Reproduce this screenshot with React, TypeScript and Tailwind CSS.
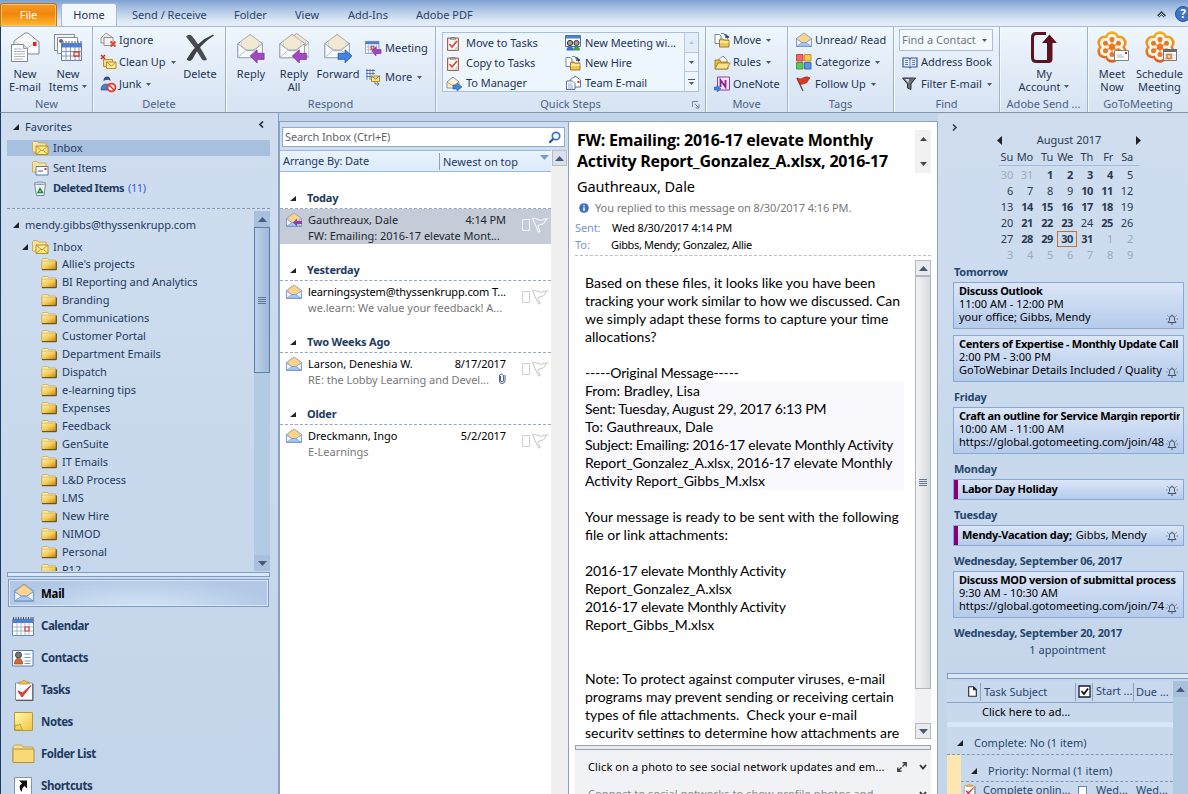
import React from "react";

type P = { children?: React.ReactNode; className?: string };

/* ---------- small shared drawings ---------- */
const Svg = ({ w, h, vb, children, className = "" }: { w: number; h: number; vb?: string; children: React.ReactNode; className?: string }) => (
  <svg width={w} height={h} viewBox={vb || `0 0 ${w} ${h}`} className={`shrink-0 block ${className}`}>{children}</svg>
);
const Down = ({ className = "" }: P) => <Svg w={5} h={3} className={className}><path d="M0 0h5L2.5 3z" fill="#4c5a70" /></Svg>;
const Tri = ({ className = "" }: P) => <Svg w={6} h={6} className={className}><path d="M6 0v6H0z" fill="#222" /></Svg>;

const EnvShape = () => (
  <>
    <path d="M1 12 15 1.5 29 12v16H1z" fill="#f4f7fb" stroke="#8791a0" />
    <path d="M5 15V9l10-7 10 7v6l-10 6z" fill="#f3e8d2" stroke="#c4baa6" strokeWidth=".7" />
    <path d="M1 12v16h28V12l-10 8h-8z" fill="#f8fafc" stroke="#929caa" />
    <path d="M1 28l10-9h8l10 9" fill="none" stroke="#b2bac5" />
  </>
);
const Arrow = ({ c, left }: { c: string; left?: boolean }) => (
  <path d={left ? "M15 26l8-7v4h8v7h-8v4z" : "M32 26l-8-7v4h-8v7h8v4z"} fill={c} stroke={left ? "#6d3190" : "#2756a5"} strokeWidth=".8" />
);
const MailOpen = ({ w = 16, h = 16, cls = "" }: { w?: number; h?: number; cls?: string }) => (
  <Svg w={w} h={h} vb="0 0 16 16" className={cls}>
    <path d="M.5 6.5 8 1l7.5 5.5v8H.5z" fill="#dce9fa" stroke="#7d9ac6" />
    <path d="M2.5 9V5.5L8 1.6l5.500 3.900V9L9.500 11h-3z" fill="#fbd58e" stroke="#e3b468" strokeWidth=".6" />
    <path d="M.5 7v7.500h15V7L10 10.500H6z" fill="#eef5fe" stroke="#7396c8" strokeWidth=".8" />
    <path d="M.8 14.200 6 10.500h4l5.200 3.700z" fill="#a9c8ee" stroke="#5f83b8" strokeWidth=".5" />
  </Svg>
);
const Folder = ({ w = 16, h = 14 }: { w?: number; h?: number }) => (
  <Svg w={w} h={h} vb="0 0 16 14">
    <defs><linearGradient id="fg" x1="0" y1="0" x2="1" y2="1"><stop offset="0" stopColor="#fff0ae" /><stop offset=".5" stopColor="#f4cb55" /><stop offset="1" stopColor="#bd800c" /></linearGradient></defs>
    <path d="M.8 3 1.800 1.500h5L7.800 3h6.700v9H.8z" fill="#f9eab0" stroke="#c9a74a" strokeWidth=".7" />
    <path d="M1 4.200h14V12.500H1z" fill="url(#fg)" stroke="#c39a3c" strokeWidth=".5" />
    <path d="M1 12.700h14.300V4.500" fill="none" stroke="#5a400c" strokeWidth="1" />
  </Svg>
);
const FolderMail = ({ sent }: { sent?: boolean }) => (
  <Svg w={17} h={15}>
    <path d="M.5 1.500 1.500.5h4l1 1.500H14v9H.5z" fill="#f7e4a0" stroke="#c7a24d" strokeWidth=".8" />
    {sent ? (
      <>
        <path d="M4 5.500h12v8.500H4z" fill="#fff" stroke="#5a78ac" />
        <path d="M6 10h5" stroke="#5a78ac" strokeWidth="1.200" /><path d="M12.500 7h2v2h-2z" fill="#d33" />
      </>
    ) : (
      <>
        <path d="M4 5h12v8.500H4z" fill="#fde88a" stroke="#b88d22" />
        <path d="M4 5l6 5 6-5M4 13.500l4.500-4M16 13.500l-4.500-4" fill="none" stroke="#b88d22" strokeWidth=".9" />
      </>
    )}
  </Svg>
);
const Bin = () => (
  <Svg w={17} h={15}>
    <path d="M2.500 2.500h11l-1.500 12H4.500z" fill="#eef3f6" stroke="#7c8a99" />
    <path d="M2 2.500C4 .5 12 .5 14 2.500 12 4 4 4 2 2.500z" fill="#cfd8e0" stroke="#8795a5" />
    <path d="M6 11.500 8 7.500l2.500 4z" fill="none" stroke="#19903a" strokeWidth="1.500" />
  </Svg>
);
const Clip = ({ w = 15, h = 16 }: { w?: number; h?: number }) => (
  <Svg w={w} h={h} vb="0 0 20 21">
    <path d="M1.500 3h17v17h-17z" fill="#fbfbfd" stroke="#8b8f99" />
    <path d="M19 4v16.500H2" fill="none" stroke="#555b68" strokeWidth="1" />
    <path d="M5 4V2h3l1-1.500h2L12 2h3v2z" fill="#f3c34e" stroke="#b58424" strokeWidth=".7" />
    <path d="M4 11l4 6L17 5.500 8.500 13z" fill="#e8483c" stroke="#c42c24" />
  </Svg>
);
const ClipRibbon = () => (
  <Svg w={14} h={15} vb="0 0 14 15">
    <path d="M1.500 2h11v12.500h-11z" fill="#e9d9d3" stroke="#a0634d" /><path d="M3 3.500h8v9.500H3z" fill="#fdfdfd" />
    <path d="M11 13v-3L8.500 13z" fill="#c9c4c4" />
    <path d="M4 3.200 5 1.500h4l1 1.700z" fill="#b5b0ae" stroke="#6d6461" strokeWidth=".6" /><path d="M3.500 8 6 11l5-6" fill="none" stroke="#e2412f" strokeWidth="1.700" />
  </Svg>
);
const Cal = ({ w = 22, h = 19 }: { w?: number; h?: number }) => (
  <Svg w={w} h={h} vb="0 0 22 19">
    <path d="M.5 2.500h21v16H.5z" fill="#fff" stroke="#6b87b8" />
    <path d="M1 2h20v4H1z" fill="#4f7fcf" />
    <path d="M1.500 0v2.500M4 0v2.500M6.500 0v2.500M9 0v2.500M11.500 0v2.500M14 0v2.500M16.500 0v2.500M19 0v2.500M21 0v2.500" stroke="#3b4d70" strokeWidth="1" />
    <path d="M1 10h20M1 14h20M5 6v12M9 6v12M13 6v12M17 6v12" stroke="#8fa5cc" strokeWidth=".8" />
    <path d="M13 10h4v4h-4z" fill="#fff" stroke="#d23c2a" strokeWidth="1.200" />
  </Svg>
);
const FoldPage = () => (
  <Svg w={16} h={15}>
    <path d="M1 1.500h4.500L7 3v7.500H1zM7 .5h3l1.500 1.500V5" fill="#fff" stroke="#6c7c96" strokeWidth=".9" />
    <path d="M10 2q3-1 3.500 2M12 3.500l1.500 1.500L15 3.500" fill="none" stroke="#333c50" strokeWidth="1.100" />
    <path d="M5.500 7 6 6h3l1 1h5v7H5.500z" fill="#f0c552" stroke="#8a6412" strokeWidth=".8" /><path d="M6 8h8.500v2H6z" fill="#fbe69a" />
  </Svg>
);
const petals = [0, 1, 2, 3, 4, 5].map((i) => {
  const a = ((i * 60 - 90) * Math.PI) / 180;
  return [Math.cos(a), Math.sin(a)];
});
const Flower = ({ cal }: { cal?: boolean }) => (
  <Svg w={34} h={34}>
    <defs><linearGradient id="gt" gradientUnits="userSpaceOnUse" x1="0" y1="0" x2="0" y2="32"><stop offset="0" stopColor="#efb51f" /><stop offset="1" stopColor="#dc5a22" /></linearGradient></defs>
    {petals.map(([x, y], i) => <circle key={i} cx={16 + 8.800 * x} cy={16 + 8.800 * y} r={7} fill="url(#gt)" />)}
    {petals.map(([x, y], i) => <circle key={i} cx={16 + 8 * x} cy={16 + 8 * y} r={5.100} fill="#fdf6ea" />)}
    <circle cx={16} cy={16} r={8} fill="#fdf6ea" />
    {petals.map(([x, y], i) => (
      <g key={i}><path d={`M16 16L${16 + 7.500 * x} ${16 + 7.500 * y}`} stroke="#e8842a" strokeWidth="1.300" /><circle cx={16 + 7.500 * x} cy={16 + 7.500 * y} r={2.500} fill="#e67a28" /></g>
    ))}
    <circle cx={16} cy={16} r={3.200} fill="#e67a28" />
    {cal ? (
      <g><path d="M19.500 18.500h13v11h-13z" fill="#fff" stroke="#777" /><path d="M19 18h14v3H19z" fill="#666b74" /><path d="M22 22v7M25 22v7M28 22v7M20 24h12M20 27h12" stroke="#bbb" strokeWidth=".6" /><path d="M23 23.500h4v4h-4z" fill="none" stroke="#e07a20" strokeWidth="1.500" /></g>
    ) : (
      <g><path d="M18.500 19.500h14v10h-14z" fill="#fff" stroke="#7c8086" /><path d="M29 21h2v2h-2z" fill="#d22" /><path d="M21 24h5M21 26h7" stroke="#8fa0b8" strokeWidth=".8" /></g>
    )}
  </Svg>
);
const Bell = () => (
  <Svg w={12} h={12} className="absolute right-[5px] bottom-[3px]">
    <path d="M2 9.500h8L8.500 7.500V5Q8.500 2.800 6 2.800T3.500 5v2.500zM5 11h2M6 1.500v1M1.500 2.500l1 1M10.500 2.500l-1 1M.3 6h1M11.700 6h-1" fill="none" stroke="#3a4658" strokeWidth=".9" />
  </Svg>
);
const Flag = ({ c }: { c: string }) => (
  <Svg w={28} h={18}>
    <path d="M1.500 4.500h7v11h-7z" fill="none" stroke={c} />
    <path d="M11.500 3.500 17.500 17l1.500-.8-2.200-5.200q2-1.800 4-1.600 2 0 3.200-2.900.8-1.700 2.500-2.700-2.500-.3-4.500.7-2.500 1.500-5.500-.3-2.500-1.500-5-.7z" fill="none" stroke={c} strokeWidth="1.100" />
  </Svg>
);

/* ---------- ribbon ---------- */
const Group = ({ label, w, children, last }: { label: string; w: string; children: React.ReactNode; last?: boolean }) => (
  <div className={`${w} h-full shrink-0 flex flex-col border-r ${last ? "border-transparent" : "border-[#9fb3cf]"} shadow-[1px_0_0_#f3f8fd]`}>
    <div className="h-[69px] flex">{children}</div>
    <div className="h-[15px] leading-[15px] text-center text-[#4d6284] whitespace-nowrap">{label}</div>
  </div>
);
const Big = ({ icon, a, b, w, down }: { icon: React.ReactNode; a: string; b?: string; w: string; down?: boolean }) => (
  <div className={`${w} shrink-0 pt-[3px] flex flex-col items-center`}>
    <div className="h-[37px] flex items-start justify-center">{icon}</div>
    <div className="leading-[13px] h-[13px] whitespace-nowrap">{a}</div>
    <div className="leading-[13px] h-[13px] whitespace-nowrap flex items-center gap-[4px]">{b}{down && <Down />}</div>
  </div>
);
const Small = ({ icon, t, down }: { icon: React.ReactNode; t: string; down?: boolean }) => (
  <div className="h-[22px] flex items-center whitespace-nowrap">
    <div className="w-[19px] flex">{icon}</div>
    <span>{t}</span>{down && <Down className="ml-[5px]" />}
  </div>
);
const QS = ({ icon, t }: { icon: React.ReactNode; t: string }) => (
  <div className="h-[20px] flex items-center whitespace-nowrap tracking-[-0.05px]"><div className="w-[20px] flex">{icon}</div><span>{t}</span></div>
);
const Mail32 = ({ children, cls = "" }: { children?: React.ReactNode; cls?: string }) => (
  <Svg w={28} h={30} vb="0 0 32 34" className={`mt-[3px] ${cls}`}><EnvShape />{children}</Svg>
);

function Ribbon() {
  return (
    <div className="h-[87px] shrink-0 flex border-t border-[#a9bbd2] border-b border-b-[#8593a8] border-l border-l-[#1c3a66] bg-[linear-gradient(#eff6fd,#e3edf8_45%,#d6e3f3)]">
      <Group label="New" w="w-[92px]">
        <Big w="w-[48px]" a="New" b="E-mail" icon={
          <Svg w={30} h={32} className="mt-px">
            <path d="M4 10 15 2h3l11 9v12H4z" fill="#f8fafc" stroke="#7d8896" /><path d="M4 10l12 8 12-8" fill="#f2f2ee" stroke="#b0b4ba" strokeWidth=".7" /><path d="M23 11h3.500v4H23z" fill="#d8232a" />
            <path d="M1.500 13.500h12l4 4v13h-16z" fill="#fff" stroke="#7d8896" /><path d="M13.500 13.500v4h4" fill="#dde" stroke="#7d8896" strokeWidth=".8" /><path d="M4 18h8M4 20.500h11M4 23h11M4 25.500h11M4 28h9" stroke="#aab4c4" />
          </Svg>} />
        <Big w="w-[38px]" a="New" b="Items" down icon={
          <Svg w={30} h={32} className="mt-px">
            <path d="M1.500 3.500h20v16h-20z" fill="#f0f2f6" stroke="#858d9b" /><path d="M4.500 6.500h20v16h-20z" fill="#fff" stroke="#858d9b" /><circle cx="8" cy="10" r="2" fill="#667" />
            <path d="M8.500 12.500h20v17h-20z" fill="#fff" stroke="#5f7eb5" /><path d="M8 12h21v4.500H8z" fill="#4f7fcf" />
            <path d="M10 10v3M13 10v3M16 10v3M19 10v3M22 10v3M25 10v3M28 10v3" stroke="#6b7fa5" strokeWidth="1.300" />
            <path d="M9 20.500h20M9 25h20M13 16v14M17.500 16v14M22 16v14M26 16v14" stroke="#7f96c4" /><path d="M21 21h5v4h-5z" fill="#fff" stroke="#d23c2a" strokeWidth="1.300" />
          </Svg>} />
      </Group>
      <Group label="Delete" w="w-[133px]">
        <div className="w-[86px] pl-[7px] pt-[2px]">
          <Small t="Ignore" icon={<Svg w={17} h={16}><path d="M1 6l5-5 6 4v6H1z" fill="#f6e7c8" stroke="#969ca8" /><path d="M4 5.500h9v8H4z" fill="#eef1f6" stroke="#8a93a2" /><path d="M10.500 9.500l5 5M15.500 9.500l-5 5" stroke="#e0402e" strokeWidth="1.800" /></Svg>} />
          <Small t="Clean Up" down icon={<Svg w={17} h={16}><path d="M1 1l4 4M5 1 1 5" stroke="#d8301f" strokeWidth="1.600" /><path d="M3.500 5.500h9v7h-9z" fill="#f8dd84" stroke="#b98d22" /><path d="M6.500 8h9.500v6.500H6.500z" fill="#fdeca0" stroke="#b98d22" /><path d="M6.500 8l5 4 4.500-4" fill="none" stroke="#b98d22" /></Svg>} />
          <Small t="Junk" down icon={<Svg w={17} h={17}><circle cx="7" cy="4.500" r="3.400" fill="#dfe5ee" /><path d="M3.500 5q0-4.500 3.500-4.500T10.500 5Q8 2.500 3.500 5z" fill="#36507f" /><path d="M1 14q0-6 5-6 5 0 5 6z" fill="#4c7bd0" stroke="#2f4f92" strokeWidth=".7" /><circle cx="11.500" cy="11.500" r="3.900" fill="#fff" stroke="#df3b25" strokeWidth="1.800" /><path d="M9 9l5 5" stroke="#df3b25" strokeWidth="1.600" /></Svg>} />
        </div>
        <Big w="w-[42px]" a="Delete" icon={
          <Svg w={30} h={30} className="mt-[3px]"><path d="M1 3.500Q4 .5 7 3q8 10 15 23.500-3 2-5 0Q10 14 1 3.500z" fill="#4a4c4f" /><path d="M29 2.500Q15 11 7.500 26 5 29.500 1.500 26.500 12 8 28 1.500z" fill="#3f4144" /></Svg>} />
      </Group>
      <Group label="Respond" w="w-[210px]">
        <Big w="w-[50px]" a="Reply" icon={<Mail32><Arrow c="#a447c3" left /></Mail32>} />
        <Big w="w-[36px]" a="Reply" b="All" icon={<Svg w={30} h={30} vb="0 0 34 34" className="mt-[3px]"><g transform="translate(5 -1)"><EnvShape /></g><EnvShape /><Arrow c="#a447c3" left /></Svg>} />
        <Big w="w-[52px]" a="Forward" icon={<Mail32><Arrow c="#3f83e6" /></Mail32>} />
        <div className="pt-[10px] pl-[1px]">
          <div className="h-[22px] flex items-center"><div className="w-[20px]"><Svg w={17} h={16}><g transform="scale(.68 .7)"><path d="M.5 2h20v17H.5z" fill="#fff" stroke="#5876b5" /><path d="M.5 2h20v4H.5z" fill="#4f7fcf" /><path d="M1 10h19M1 14h19M5 6v13M9 6v13M13 6v13M17 6v13" stroke="#8fa5cc" /><path d="M9 9h4v4H9z" fill="none" stroke="#d23c2a" strokeWidth="1.500" /></g><path d="M7 11l4-4v2.500h5v4h-5V16z" fill="#a447c3" stroke="#6d3190" strokeWidth=".6" /></Svg></div>Meeting</div>
          <div className="h-[7px]" />
          <div className="h-[22px] flex items-center"><div className="w-[20px]"><Svg w={17} h={17}><path d="M1 1h9v10H1z" fill="#fff" /><path d="M1 1.500h9M1 4.500h9M1 7.500h5M2 0v11M5 0v11M8 0v6" stroke="#5578b5" /><path d="M6.500 7h8v5.500h-8z" fill="#fbe08a" stroke="#b98d22" /><path d="M6.500 7l4 3 4-3M10 13v2h3M12 13.500l2 1.500-2 1.500" fill="none" stroke="#6c7990" /></Svg></div>More<Down className="ml-[5px]" /></div>
        </div>
      </Group>
      <Group label="Quick Steps" w="w-[270px]">
        <div className="mt-[5px] ml-[6px] w-[257px] h-[60px] border border-[#a9bfdc] bg-[#edf5fd] flex relative">
          <div className="w-[120px] pl-[3px]">
            <QS t="Move to Tasks" icon={<ClipRibbon />} /><QS t="Copy to Tasks" icon={<ClipRibbon />} />
            <QS t="To Manager" icon={<Svg w={17} h={16}><path d="M1 7l6-5 6 5v6H1z" fill="#fdf3d8" stroke="#8c97a8" /><path d="M1 7l6 4 6-4" fill="none" stroke="#c99d3c" /><path d="M7 10h4V8l5 4-5 4v-2H7z" fill="#3f83e6" stroke="#2756a5" strokeWidth=".6" /></Svg>} />
          </div>
          <div className="w-[121px] pl-[2px]">
            <QS t="New Meeting wi..." icon={<Svg w={17} h={16}><path d="M.5.5h15v11H.5z" fill="#fff" stroke="#4f6fae" /><path d="M.5.5h15v3H.5z" fill="#4f7fcf" /><circle cx="5" cy="8" r="2.600" fill="#a98" stroke="#333" /><circle cx="11.500" cy="8" r="2.600" fill="#a98" stroke="#333" /><path d="M1.500 15.500q0-4 3.500-4t3.500 4z" fill="#3f6fce" /><path d="M8 15.500q0-4 3.500-4t3.500 4z" fill="#3fa04e" /></Svg>} />
            <QS t="New Hire" icon={<FoldPage />} />
            <QS t="Team E-mail" icon={<Svg w={17} h={16}><path d="M5 5l5-4 5.500 4v7H5z" fill="#fff" stroke="#5f7396" /><path d="M12.500 6h2v2h-2z" fill="#d22" /><path d="M1.500 6h6l2.500 2.500v6h-8.500z" fill="#fff" stroke="#5f7396" /><path d="M3 9h4M3 11h5M3 13h5" stroke="#8fa5c5" /></Svg>} />
          </div>
          <div className="w-[14px] flex flex-col border-l border-[#b7cae2]">
            <div className="h-[19px] flex items-center justify-center bg-[#e3edf8]"><Svg w={5} h={3}><path d="M0 3h5L2.500 0z" fill="#b9c5d6" /></Svg></div>
            <div className="h-[20px] flex items-center justify-center border-y border-[#b7cae2]"><Down /></div>
            <div className="h-[19px] flex flex-col gap-[2px] items-center justify-center"><div className="w-[7px] h-px bg-[#4c5a70]" /><Down /></div>
          </div>
        </div>
        <div className="relative"><Svg w={8} h={8} className="absolute left-[-7px] top-[74px]"><path d="M.5 6V.5H6M3 3l4 4M7 3.500V7H3.500" fill="none" stroke="#75879f" /></Svg></div>
      </Group>
      <Group label="Move" w="w-[82px]">
        <div className="pl-[8px] pt-[2px]">
          <Small t="Move" down icon={<FoldPage />} />
          <Small t="Rules" down icon={<Svg w={17} h={15}><path d="M4 5l5-4 4 4v4H4z" fill="#f4f6fa" stroke="#8c97a8" /><path d="M1 5h5l1 2h7v7H1z" fill="#e9b93e" stroke="#9a7319" strokeWidth=".8" /><path d="M4 8h12l-3 6H1z" fill="#fbe28c" stroke="#9a7319" strokeWidth=".8" /></Svg>} />
          <Small t="OneNote" icon={<Svg w={17} h={16}><path d="M3.500 1h12v13h-12z" fill="#f7e6f7" stroke="#9a3a9e" /><path d="M6.500 11V4l5 7V4" fill="none" stroke="#8a2390" strokeWidth="1.800" /><path d="M0 11h3V9l4 3.500L3 16v-2H0z" fill="#3f83e6" stroke="#2756a5" strokeWidth=".5" /></Svg>} />
        </div>
      </Group>
      <Group label="Tags" w="w-[106px]">
        <div className="pl-[8px] pt-[2px]">
          <Small t="Unread/ Read" icon={<MailOpen />} />
          <Small t="Categorize" down icon={<Svg w={16} h={16}><path d="M.5.5h6.500v6.500H.5z" fill="#ee6a5e" stroke="#c4463c" /><path d="M8.500.5H15v6.500H8.500z" fill="#f7c550" stroke="#c9952a" /><path d="M.5 8.500h6.500V15H.5z" fill="#62c75a" stroke="#3f9a3b" /><path d="M8.500 8.500H15V15H8.500z" fill="#5f93e8" stroke="#3c69b8" /></Svg>} />
          <Small t="Follow Up" down icon={<Svg w={16} h={16}><path d="M1 2l6 13" stroke="#555" strokeWidth="1.400" /><path d="M1 2q4 2 7-.5 3-1.500 6 .5-2 2-3 4.500Q8 8 4 8.500z" fill="#d93a26" stroke="#a62416" strokeWidth=".7" /></Svg>} />
        </div>
      </Group>
      <Group label="Find" w="w-[106px]">
        <div className="pl-[5px] pt-[2px]">
          <div className="w-[94px] h-[22px] border border-[#a9bfdc] bg-[#f4f9fe] flex items-center text-[#71777f] pl-[2px] whitespace-nowrap">Find a Contact<Down className="ml-[6px]" /></div>
          <div className="pl-[3px]">
            <Small t="Address Book" icon={<Svg w={16} h={13}><path d="M1 2h6l1 1 1-1h6v9H9l-1 1-1-1H1z" fill="#e4edfa" stroke="#36558f" strokeWidth="1.200" /><path d="M8 3v9M3 4.500h3M3 6.500h3M3 8.500h3M10 4.500h3M10 6.500h3M10 8.500h3" stroke="#5f83c5" /></Svg>} />
            <Small t="Filter E-mail" down icon={<Svg w={15} h={14}><path d="M.5 1h13L9 7v5.500L5.500 11V7z" fill="#6b6e73" stroke="#33363b" /><path d="M3 2h4L6.500 6z" fill="#ddd" /></Svg>} />
          </div>
        </div>
      </Group>
      <Group label="Adobe Send ..." w="w-[88px]">
        <Big w="w-[88px]" a="My" b="Account" down icon={<Svg w={28} h={32} className="mt-px"><path d="M16 2.500H6q-3.500 0-3.500 4v20q0 4 4 4h12q2.500 0 2.500-3V12" fill="none" stroke="#5c1320" strokeWidth="3" /><path d="M17 12v18h5V12h5l-7.500-8.500L12 12z" fill="#5c1320" /></Svg>} />
      </Group>
      <Group label="GoToMeeting" w="w-[101px]" last>
        <Big w="w-[48px]" a="Meet" b="Now" icon={<div className="mt-px ml-[2px]"><Flower /></div>} />
        <Big w="w-[47px]" a="Schedule" b="Meeting" icon={<div className="mt-px ml-[2px]"><Flower cal /></div>} />
      </Group>
    </div>
  );
}

/* ---------- navigation pane ---------- */
const folders = ["Allie's projects", "BI Reporting and Analytics", "Branding", "Communications", "Customer Portal", "Department Emails", "Dispatch", "e-learning tips", "Expenses", "Feedback", "GenSuite", "IT Emails", "L&D Process", "LMS", "New Hire", "NIMOD", "Personal", "P12"];

const navs: [string, React.ReactNode][] = [
  ["Calendar", <Cal />],
  ["Contacts", <Svg w={22} h={17}><path d="M.5.5h20.500v15.500H.5z" fill="#fff" stroke="#5f7da8" /><circle cx="6.500" cy="5" r="3" fill="#777" stroke="#444" /><path d="M2.500 14q0-5.500 4-5.500t4 5.500z" fill="#d9692b" stroke="#8d3c12" strokeWidth=".7" /><path d="M12.500 4h6M12.500 7.500h6M12.500 11h6M12.500 13.500h6" stroke="#6e95cf" /></Svg>],
  ["Tasks", <div className="ml-[2px]"><Clip w={20} h={21} /></div>],
  ["Notes", <Svg w={20} h={20} className="ml-[2px]"><defs><linearGradient id="nt" x1="0" y1="0" x2="1" y2="1"><stop offset="0" stopColor="#fffbb0" /><stop offset="1" stopColor="#efc63f" /></linearGradient></defs><path d="M.5.5h18v18H.5z" fill="url(#nt)" stroke="#b99a32" /><path d="M1 13q3 1 5-1 1 3 2.500 6H1z" fill="#f0d45c" stroke="#b08a1e" strokeWidth=".7" /></Svg>],
  ["Folder List", <Svg w={23} h={20}><path d="M1 2.500 2.500 1h7L11 3h10v15H1z" fill="#f6df98" stroke="#c7a24d" /><path d="M1 5h21v13.500H1z" fill="#f8d976" stroke="#b58f38" /></Svg>],
  ["Shortcuts", <Svg w={18} h={18} className="ml-[2px]"><path d="M.5.5h17v17H.5z" fill="#fff" stroke="#8794a8" /><path d="M5 3.500h8v8l-2.500-2.500q-3 2.500-2.500 6-5-5 0-8.500z" fill="#111" /></Svg>],
];

const ScrollBtn = ({ up, cls = "" }: { up?: boolean; cls?: string }) => (
  <div className={`h-[16px] shrink-0 flex items-center justify-center ${cls}`}><Svg w={9} h={5}><path d={up ? "M0 5h9L4.500 0z" : "M0 0h9L4.500 5z"} fill="#4a5b7a" /></Svg></div>
);
const Grip = () => <div className="w-[8px] flex flex-col gap-px"><div className="h-px bg-[#5f7697]" /><div className="h-px bg-[#5f7697]" /><div className="h-px bg-[#5f7697]" /><div className="h-px bg-[#5f7697]" /></div>;

function Nav() {
  return (
    <div className="w-[279px] shrink-0 border-l border-[#1c3a66] border-r border-r-[#8ba2bf] pl-[6px] pr-[8px] flex flex-col text-[#1e3a5f] bg-[linear-gradient(#cfddef,#c3d5ea)]">
      <div className="h-[27px] shrink-0 flex items-center justify-between pl-[5px] pr-[6px]">
        <div className="flex items-center pt-px"><Tri className="ml-px" /><span className="ml-[6px]">Favorites</span></div>
        <Svg w={6} h={7} className="mb-[5px]"><path d="M5 .5 2 3.500l3 3" fill="none" stroke="#222e44" strokeWidth="1.700" /></Svg>
      </div>
      <div className="h-[16px] shrink-0 bg-[#a8c0e0] flex items-center pl-[25px]"><FolderMail /><span className="ml-[4px]">Inbox</span></div>
      <div className="h-[24px] shrink-0 flex items-center pl-[25px]"><FolderMail sent /><span className="ml-[4px] tracking-[-0.2px]">Sent Items</span></div>
      <div className="h-[16px] shrink-0 flex items-center pl-[25px]"><Bin /><span className="ml-[4px] font-bold tracking-[-0.5px]">Deleted Items</span><span className="ml-[4px] text-[#2f62d8] tracking-[-0.4px]">(11)</span></div>
      <div className="h-[13px] shrink-0 border-b border-dashed border-[#7f97b8]" />
      <div className="h-[360px] mt-[2px] shrink-0 flex overflow-hidden">
        <div className="w-[247px] overflow-hidden">
          <div className="h-[28px] flex items-center pl-[5px] tracking-[-0.05px]"><Tri className="ml-px" /><span className="ml-[6px]">mendy.gibbs@thyssenkrupp.com</span></div>
          <div className="h-[16px] flex items-center pl-[15px]"><Tri /><div className="ml-[4px]"><FolderMail /></div><span className="ml-[4px]">Inbox</span></div>
          {folders.map((f) => (
            <div key={f} className="h-[18px] flex items-center pl-[34px] whitespace-nowrap tracking-[-0.03px]"><Folder /><span className="ml-[5px]">{f}</span></div>
          ))}
        </div>
        <div className="w-[16px] flex flex-col bg-[#b3cae3]">
          <ScrollBtn up cls="bg-[#a9c0dd]" />
          <div className="h-[146px] border border-[#5e7ea8] bg-[linear-gradient(90deg,#bcd1e9,#9db9da)] flex items-center justify-center"><Grip /></div>
          <div className="flex-1" />
          <ScrollBtn cls="bg-[#a9c0dd]" />
        </div>
      </div>
      <div className="mt-px h-[5px] shrink-0 border border-[#7f9cc4] bg-[#dbe7f5]" />
      <div className="mt-[2px] mr-px ml-px h-[28px] shrink-0 border border-[#7f9cc4] shadow-[inset_0_0_0_1px_#dce8f6] bg-[radial-gradient(ellipse_at_50%_100%,#d3e3f5,#b1c9e6_75%)] flex items-center pl-[5px]">
        <MailOpen w={20} h={20} /><span className="ml-[7px] mt-px text-black font-bold text-[11.500px] tracking-[-0.3px]">Mail</span>
      </div>
      <div className="mt-[3px]">
        {navs.map(([t, i]) => (
          <div key={t} className="h-[32px] flex items-center pl-[5px]"><div className="w-[29px]">{i}</div><span className="font-bold text-[11.500px] tracking-[-0.45px]">{t}</span></div>
        ))}
      </div>
    </div>
  );
}

/* ---------- message list ---------- */
type Msg = { g: string; from: string; date?: string; sub: string; sel?: boolean; clip?: boolean };
const msgs: Msg[] = [
  { g: "Today", from: "Gauthreaux, Dale", date: "4:14 PM", sub: "FW: Emailing: 2016-17 elevate Mont...", sel: true },
  { g: "Yesterday", from: "learningsystem@thyssenkrupp.com T...", sub: "we.learn: We value your feedback! A..." },
  { g: "Two Weeks Ago", from: "Larson, Deneshia W.", date: "8/17/2017", sub: "RE: the Lobby Learning and Devel...", clip: true },
  { g: "Older", from: "Dreckmann, Ingo", date: "5/2/2017", sub: "E-Learnings" },
];
function List() {
  return (
    <div className="w-[289px] shrink-0 mt-[8px] border-t border-l border-[#8ba2bf] bg-white flex flex-col">
      <div className="h-[28px] shrink-0 bg-[#cfddef] pt-[5px] pl-[2px] pr-[3px]">
        <div className="h-[20px] border border-[#8fabd3] bg-white flex items-center justify-between pl-[2px] pr-[3px] text-[#5f646b]">
          <span className="tracking-[-0.1px]">Search Inbox (Ctrl+E)</span>
          <Svg w={13} h={13}><circle cx="8" cy="5" r="3.700" fill="#f2f8ff" stroke="#3f74bd" strokeWidth="1.700" /><path d="M5.300 7.700 1.300 11.700" stroke="#2c5596" strokeWidth="2.300" /></Svg>
        </div>
      </div>
      <div className="flex flex-1">
        <div className="w-[271px]">
          <div className="h-[22px] border-y border-[#9db9dc] bg-[linear-gradient(#e9f3fd,#dcebfb)] flex items-center pl-[3px] text-[#1e3a5f] tracking-[-0.1px]">
            <span className="w-[156px]">Arrange By: Date</span>
            <span className="h-[17px] leading-[17px] border-l border-[#8aa0bf] pl-[3px] w-[98px] whitespace-nowrap tracking-normal">Newest on top</span>
            <Svg w={9} h={5} className="mb-[7px] ml-[3px]"><path d="M0 0h9L4.500 5z" fill="#7d99c4" /></Svg>
          </div>
          <div className="h-[16px]" />
          {msgs.map((m) => (
            <div key={m.g} className="h-[72px]">
              <div className="h-[21px] flex items-center pl-[10px] border-b border-dashed border-[#94a8c6] font-bold text-[#1e3a5f] tracking-[-0.2px]"><Svg w={6} h={5}><path d="M6 0v5H0z" fill="#222" /></Svg><span className="ml-[11px]">{m.g}</span></div>
              <div className={`h-[35px] flex ${m.sel ? "bg-[#c5ccd7]" : ""}`}>
                <div className="w-[28px] pl-[6px] pt-[3px] relative"><MailOpen />{m.sel && <Svg w={9} h={9} className="absolute left-[13px] top-[9px]"><path d="M0 4.500 4 .5v2.500h5v3H4v2.500z" fill="#8e3fb0" /></Svg>}</div>
                <div className="w-[198px] leading-[16px] pt-[3px] whitespace-nowrap">
                  <div className={`flex justify-between ${m.sel ? "text-[#22272f]" : "text-black"}`}><span className={m.date ? "" : "tracking-[-0.13px]"}>{m.from}</span><span className="tracking-[-0.1px]">{m.date}</span></div>
                  <div className={`flex justify-between items-center ${m.sel ? "text-[#22272f]" : "text-[#787878]"}`}><span className="tracking-[-0.02px]">{m.sub}</span>{m.clip && <Svg w={8} h={11} className="mb-[3px]"><path d="M2.500 3v5q1.500 1.500 3 0V2.500Q4 0 1.500 2v6q0 2.500 2.500 2.500T7 8V2" fill="none" stroke="#49618b" /></Svg>}</div>
                </div>
                <div className="pl-[15px] pt-[6px]"><Flag c={m.sel ? "#f5f7fa" : "#cfcfcf"} /></div>
              </div>
            </div>
          ))}
        </div>
        <div className="w-[17px] pl-px bg-[#f0f0f1]"><ScrollBtn up cls="border border-[#b5bdca] bg-[#dbe1ea] w-[15px]" /></div>
      </div>
    </div>
  );
}

/* ---------- reading pane ---------- */
const body = ["Based on these files, it looks like you have been", "tracking your work similar to how we discussed. Can", "we simply adapt these forms to capture your time", "allocations?", "", "-----Original Message-----", "From: Bradley, Lisa", "Sent: Tuesday, August 29, 2017 6:13 PM", "To: Gauthreaux, Dale", "Subject: Emailing: 2016-17 elevate Monthly Activity", "Report_Gonzalez_A.xlsx, 2016-17 elevate Monthly", "Activity Report_Gibbs_M.xlsx", "", "Your message is ready to be sent with the following", "file or link attachments:", "", "2016-17 elevate Monthly Activity", "Report_Gonzalez_A.xlsx", "2016-17 elevate Monthly Activity", "Report_Gibbs_M.xlsx", "", "", "Note: To protect against computer viruses, e-mail", "programs may prevent sending or receiving certain", "types of file attachments.\u00a0 Check your e-mail", "security settings to determine how attachments are"];
const tracking = (i: number, l: string) => (i === 10 ? "tracking-[-0.07px]" : /\d/.test(l) ? "tracking-[-0.2px]" : i === 1 ? "tracking-[-0.08px]" : i === 5 ? "tracking-[-0.15px]" : "");
const Chev = () => <Svg w={8} h={6}><path d="M1 1l3 3.500L7 1" fill="none" stroke="#333" strokeWidth="1.800" /></Svg>;

function Reading() {
  return (
    <div className="w-[370px] shrink-0 mt-[8px] border border-[#8ba2bf] border-b-0 bg-white flex flex-col text-black">
      <div className="h-[134px] shrink-0 mx-[6px] border-b border-dashed border-[#b9bfc8]">
        <div className="flex justify-between pt-[8px] h-[53px]">
          <div className="font-['Open_Sans'] font-bold text-[16px] leading-[21px] tracking-[-0.23px] pl-[2px] whitespace-nowrap">FW: Emailing: 2016-17 elevate Monthly<br />Activity Report_Gonzalez_A.xlsx, 2016-17</div>
          <div className="w-[16px] h-[43px] bg-[#f1f1f1] flex flex-col justify-between items-center py-[7px]"><Svg w={7} h={4}><path d="M0 4h7L3.500 0z" fill="#444" /></Svg><Svg w={7} h={4}><path d="M0 0h7L3.500 4z" fill="#444" /></Svg></div>
        </div>
        <div className="h-[23px] leading-[23px] text-[14.500px] tracking-[-0.05px] pl-[2px]">Gauthreaux, Dale</div>
        <div className="h-[20px] flex items-center pl-[4px] text-[#777] tracking-[-0.09px]"><Svg w={10} h={10}><circle cx="5" cy="5" r="4.800" fill="#3f6fc0" /><path d="M5 2v1.300M5 4.300V8" stroke="#fff" strokeWidth="1.500" /></Svg><span className="ml-[6px]">You replied to this message on 8/30/2017 4:16 PM.</span></div>
        <div className="h-[20px] flex items-center tracking-[-0.1px]"><span className="w-[37px] text-[#7597cf]">Sent:</span>Wed 8/30/2017 4:14 PM</div>
        <div className="h-[15px] flex items-center tracking-[-0.35px]"><span className="w-[36px] text-[#7597cf] tracking-normal">To:</span>Gibbs, Mendy; Gonzalez, Allie</div>
      </div>
      <div className="h-[485px] shrink-0 flex pt-[4px]">
        <div className="w-[346px] h-[478px] overflow-hidden pl-[16px] pt-[14px] font-[Lato] text-[14px] whitespace-pre">
          {body.map((l, i) => <div key={i} className={`h-[18px] leading-[18px] w-[319px] ${tracking(i, l)} ${i > 5 && i < 12 ? "bg-[#f8f8fd]" : ""}`}>{l}</div>)}
        </div>
        <div className="w-[16px] h-[479px] flex flex-col bg-[#f1f1f3]">
          <ScrollBtn up cls="border border-[#b5b9c2] bg-[#e9ebef]" />
          <div className="h-[413px] border border-[#b0b4bd] bg-[linear-gradient(90deg,#f3f3f5,#d9dbe0)] flex items-center justify-center"><Grip /></div>
          <div className="flex-1" />
          <ScrollBtn cls="border border-[#b5b9c2] bg-[#e9ebef]" />
        </div>
      </div>
      <div className="mx-[6px] mt-[4px] h-[5px] shrink-0 border border-[#9ba1aa] bg-[#e9ebee]" />
      <div className="ml-[6px] mr-[6px] flex-1 bg-[#f0f2f5] pt-[7px] pl-[13px] whitespace-nowrap overflow-hidden">
        <div className="h-[20px] flex items-center justify-between pr-[4px]"><span className="tracking-[0.12px]">Click on a photo to see social network updates and em...</span><div className="flex items-center gap-[12px]"><Svg w={10} h={10}><path d="M5.500.8h3.700v3.700M4.500 9.200H.8V5.500M9 1 5.500 4.500M1 9l3.500-3.500" fill="none" stroke="#444" strokeWidth="1.500" /></Svg><Chev /></div></div>
        <div className="h-[34px] flex items-center justify-between pr-[4px] text-[#8a8a8a]"><span className="tracking-[0.1px]">Connect to social networks to show profile photos and</span><Chev /></div>
      </div>
    </div>
  );
}

/* ---------- to-do bar ---------- */
const weeks = ["30 31 1b 2b 3b 4b 5", "6 7 8 9 10b 11b 12", "13 14b 15b 16b 17b 18b 19", "20 21b 22b 23b 24 25b 26", "27 28b 29b 30b 31b 1 2", "3 4 5 6 7 8 9"];
const Day = ({ children }: P) => <div className="h-[18px] leading-[18px] pl-[1px] font-bold tracking-[-0.25px] text-[#26466f]">{children}</div>;
const Appt = ({ t, l1, l2, cls = "" }: { t: string; l1: string; l2: string; cls?: string }) => (
  <div className={`h-[47px] w-[231px] border border-[#8aa8d6] bg-[linear-gradient(#dbe6f7,#b5cbeb)] relative leading-[13px] pt-[1px] pl-[5px] text-black ${cls}`}>
    <div className="w-[221px] overflow-hidden whitespace-nowrap font-bold tracking-[-0.3px]">{t}</div>
    <div className="whitespace-nowrap">{l1}</div>
    <div className="whitespace-nowrap">{l2}</div>
    <Bell />
  </div>
);
const AllDay = ({ t, who }: { t: string; who?: string }) => (
  <div className="h-[21px] w-[231px] border border-[#8aa8d6] bg-[linear-gradient(#dbe6f7,#b5cbeb)] relative leading-[17px] text-black flex">
    <div className="w-[4px] bg-[#800080]" /><span className="pl-[4px] font-bold tracking-[-0.25px]">{t}</span><span className="pl-[4px]">{who}</span><Bell />
  </div>
);
function Todo() {
  return (
    <div className="w-[250px] shrink-0 flex flex-col text-[#26466f] overflow-hidden bg-[linear-gradient(#cfddef,#c3d5ea)]">
      <div className="h-[150px] shrink-0 relative pt-[17px] text-[#2b3a52]">
        <Svg w={6} h={7} className="absolute left-[14px] top-[11px]"><path d="M1 .5l3 3-3 3" fill="none" stroke="#3a4658" strokeWidth="1.700" /></Svg>
        <div className="h-[20px] flex items-center pl-[59px]"><Svg w={5} h={9} className="mt-px"><path d="M5 0v9L0 4.500z" fill="#222" /></Svg><span className="w-[134px] text-center">August 2017</span><Svg w={5} h={9} className="mt-px"><path d="M0 0v9l5-4.500z" fill="#222" /></Svg></div>
        <div className="ml-[61px] w-[140px] h-[16px] mb-[1px] border-b border-[#9fbde3] leading-[14px]">
          <div className="-ml-[6px] flex tracking-[-0.2px]">
            {["Su", "Mo", "Tu", "We", "Th", "Fr", "Sa"].map((d) => <div key={d} className="w-[20px] text-right">{d}</div>)}
          </div>
        </div>
        {weeks.map((w, r) => (
          <div key={r} className="ml-[55px] flex h-[16px] leading-[16px]">
            {w.split(" ").map((d, c) => {
              const dim = (r === 0 && c < 2) || (r === 4 && c > 4) || r === 5;
              const today = r === 4 && c === 3;
              return <div key={c} className={`w-[20px] text-right relative ${d.endsWith("b") ? "font-bold tracking-[-0.4px]" : "tracking-[-0.2px]"} ${dim ? "text-[#9dabbf]" : ""}`}>{d.replace("b", "")}{today && <div className="absolute left-[4px] top-0 w-[20px] h-[16px] border border-[#c8702c]" />}</div>;
            })}
          </div>
        ))}
      </div>
      <div className="h-[410px] shrink-0 pl-[15px] flex flex-col">
        <Day>Tomorrow</Day><div className="h-px" />
        <Appt t="Discuss Outlook" l1="11:00 AM - 12:00 PM" l2="your office; Gibbs, Mendy" />
        <Appt cls="mt-[6px]" t="Centers of Expertise - Monthly Update Call" l1="2:00 PM - 3:00 PM" l2="GoToWebinar Details Included / Quality" />
        <div className="h-[6px]" /><Day>Friday</Day><div className="h-px" />
        <Appt t="Craft an outline for Service Margin reporting" l1="10:00 AM - 11:00 AM" l2="https://global.gotomeeting.com/join/48" />
        <div className="h-[6px]" /><Day>Monday</Day><div className="h-px" />
        <AllDay t="Labor Day Holiday" />
        <div className="h-[6px]" /><Day>Tuesday</Day><div className="h-px" />
        <AllDay t="Mendy-Vacation day;" who="Gibbs, Mendy" />
        <div className="h-[6px]" /><Day>Wednesday, September 06, 2017</Day><div className="h-px" />
        <Appt t="Discuss MOD version of submittal process" l1="9:30 AM - 10:30 AM" l2="https://global.gotomeeting.com/join/74" />
        <div className="h-[6px]" /><Day>Wednesday, September 20, 2017</Day>
        <div className="w-[229px] text-center leading-[16px]">1 appointment</div>
      </div>
      <div className="ml-[9px] h-[6px] shrink-0 border border-r-0 border-[#7f9cc4] bg-[#dbe7f5]" />
      <div className="ml-[9px] mt-[2px] flex flex-1 whitespace-nowrap">
        <div className="w-[226px] bg-[#c9d9ed]">
          <div className="h-[22px] flex items-center border-b border-[#8ba2c4]">
            <Svg w={9} h={11} className="ml-[21px]"><path d="M.7.7h4.800L8.300 3.500v6.800H.7zM5.500.7v3h3" fill="#fff" stroke="#1c2738" strokeWidth="1.100" /></Svg>
            <span className="ml-[3px] w-[95px] h-[18px] leading-[18px] border-l border-[#8ba2c4] pl-[3px]">Task Subject</span>
            <span className="w-[18px] h-[18px] border-x border-[#8ba2c4] flex items-center justify-center"><Svg w={13} h={13}><path d="M1 1h11v11H1z" fill="#fff" stroke="#111e35" strokeWidth="1.300" /><path d="M3.500 6 6 9l4-5.500" fill="none" stroke="#111" strokeWidth="1.800" /></Svg></span>
            <span className="w-[40px] pl-[3px]">Start ...</span><span className="h-[18px] leading-[18px] border-l border-[#8ba2c4] pl-[2px]">Due ...</span>
          </div>
          <div className="h-[19px] leading-[18px] pl-[35px] text-black">Click here to ad...</div>
          <div className="h-[5px] bg-[#d6e6fb]" />
          <div className="h-[28px] pt-[5px] flex items-center pl-[10px] border-b border-dashed border-[#8398b8]"><Tri /><span className="ml-[11px]">Complete: No (1 item)</span></div>
          <div className="flex"><div className="w-[14px] h-[50px] bg-[#fde6b0]" /><div className="flex-1">
            <div className="h-[27px] pt-[6px] flex items-center pl-[10px] border-b border-dashed border-[#8398b8]"><Tri /><span className="ml-[11px]">Priority: Normal (1 item)</span></div>
            <div className="h-[16px] flex items-center pl-[2px]"><Clip w={13} h={13} /><span className="ml-[7px] w-[95px]">Complete onlin...</span><div className="w-[9px] h-[9px] bg-white border border-[#6e86aa]" /><span className="ml-[9px] w-[40px]">Wed...</span><span>Wed...</span></div>
          </div></div>
        </div>
        <div className="w-[15px] bg-[#b3cae3]"><ScrollBtn up cls="bg-[#a9c0dd]" /></div>
      </div>
    </div>
  );
}

export default function App() {
  return (
    <div className="w-[1188px] h-[794px] overflow-hidden flex flex-col font-['Noto_Sans',sans-serif] text-[11px] text-[#1e3556] bg-[#c3d5ea]">
      <div className="h-[26px] shrink-0 flex items-end bg-[linear-gradient(#7ea1d2,#a6c0e2_30%,#dce8f5_80%,#e6eff9)] whitespace-nowrap">
        <div className="w-[57px] h-[23px] rounded-t-[3px] border border-[#b8741c] border-b-0 bg-[linear-gradient(#f79a2a,#f0860a_45%,#fdb92e)] text-white flex items-center justify-center shadow-[inset_0_0_0_1px_#fbc261]">File</div>
        <div className="ml-[4px] w-[56px] h-[23px] rounded-t-[3px] border border-[#a9bbd2] border-b-0 bg-[#f1f7fd] flex items-center justify-center">Home</div>
        <div className="flex h-[22px] items-center flex-1 text-[#2c4468]">
          <span className="ml-[15px] w-[102px]">Send / Receive</span><span className="w-[61px]">Folder</span><span className="w-[53px]">View</span><span className="w-[68px]">Add-Ins</span><span>Adobe PDF</span>
        </div>
        <div className="flex items-center h-[24px] gap-[9px] w-[31px] overflow-hidden">
          <Svg w={9} h={7}><path d="M1 5.500 4.500 2 8 5.500" fill="none" stroke="#334260" strokeWidth="3" /><path d="M1.500 5.500 4.500 2.500 7.500 5.500" fill="none" stroke="#fff" strokeWidth="1" /></Svg>
          <div className="w-[16px] h-[16px] shrink-0 rounded-full bg-[#3c74c8] border border-[#2a549c] text-white font-bold text-[12px] leading-[14px] text-center">?</div>
        </div>
      </div>
      <Ribbon />
      <div className="flex flex-1 min-h-0"><Nav /><List /><Reading /><Todo /></div>
    </div>
  );
}
